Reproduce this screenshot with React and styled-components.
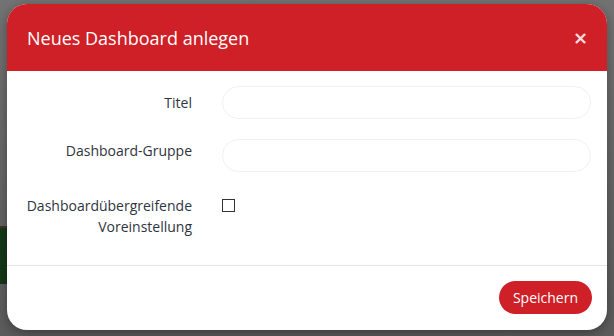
import styled, { createGlobalStyle } from "styled-components";

const Global = createGlobalStyle`
  html, body {
    margin: 0;
    padding: 0;
    width: 614px;
    height: 336px;
    overflow: hidden;
    font-family: "Open Sans", "Noto Sans", sans-serif;
  }
  * { box-sizing: border-box; }
`;

const Page = styled.div`
  position: relative;
  width: 614px;
  height: 336px;
  background: #777;
`;

const BackgroundStripe = styled.div`
  position: absolute;
  left: 0;
  top: 226px;
  width: 40px;
  height: 58px;
  background: #0b3d0f;
  border-top: 2px solid #4a3320;
`;

const Overlay = styled.div`
  position: absolute;
  inset: 0;
  background: linear-gradient(to bottom, rgba(90, 90, 90, 0.15), rgba(40, 40, 40, 0.35));
  display: flex;
  justify-content: center;
  padding-top: 4px;
`;

const Modal = styled.div`
  width: 600px;
  height: 326px;
  background: #fff;
  border-radius: 20px;
  overflow: hidden;
  box-shadow: 0 3px 12px rgba(0, 0, 0, 0.35);
  display: flex;
  flex-direction: column;
`;

const Header = styled.div`
  height: 67px;
  flex-shrink: 0;
  background: #cf1f27;
  display: flex;
  align-items: center;
  justify-content: space-between;
  padding: 0 19px 0 20px;
`;

const Title = styled.h4`
  margin: 0;
  font-size: 18px;
  font-weight: 400;
  color: #fff;
`;

const Close = styled.button`
  border: 0;
  background: none;
  padding: 0;
  color: #fff;
  opacity: 0.85;
  font-size: 18px;
  font-weight: 700;
  line-height: 1;
  font-family: "DejaVu Sans", sans-serif;
  cursor: pointer;
`;

const Body = styled.div`
  padding: 15px 16px 10px 16px;
  display: flex;
  flex-direction: column;
  gap: 20px;
  border-bottom: 1px solid #e5e5e5;
`;

const Row = styled.div`
  display: grid;
  grid-template-columns: 169px 1fr;
  column-gap: 30px;
  align-items: ${(p) => (p.$top ? "start" : "center")};
  margin-bottom: ${(p) => (p.$last ? "18px" : "0")};
`;

const Label = styled.label`
  text-align: right;
  font-size: 14px;
  line-height: 21px;
  color: #2f3540;
  margin-top: ${(p) => p.$shift || 0}px;
`;

const Input = styled.input`
  height: 33px;
  width: 369px;
  border: 1px solid #f0f0f0;
  border-radius: 17px;
  background: #fff;
  padding: 0 14px;
  font-family: inherit;
  font-size: 14px;
  outline: none;
`;

const Check = styled.span`
  display: block;
  width: 13px;
  height: 13px;
  border: 1.5px solid #333;
  margin-top: 7px;
`;

const Footer = styled.div`
  flex: 1;
  display: flex;
  justify-content: flex-end;
  align-items: flex-start;
  padding: 15px 15px 0 0;
`;

const Button = styled.button`
  height: 33px;
  padding: 0 14px;
  border: 0;
  border-radius: 17px;
  background: #cf1f27;
  color: #fff;
  font-family: inherit;
  font-size: 14px;
  cursor: pointer;
`;

export default function App() {
  return (
    <Page>
      <Global />
      <BackgroundStripe />
      <Overlay>
        <Modal>
          <Header>
            <Title>Neues Dashboard anlegen</Title>
            <Close aria-label="Schließen">×</Close>
          </Header>
          <Body>
            <Row>
              <Label>Titel</Label>
              <Input />
            </Row>
            <Row>
              <Label $shift={-10}>Dashboard-Gruppe</Label>
              <Input />
            </Row>
            <Row $top $last>
              <Label $shift={3}>
                Dashboardübergreifende
                <br />
                Voreinstellung
              </Label>
              <Check />
            </Row>
          </Body>
          <Footer>
            <Button>Speichern</Button>
          </Footer>
        </Modal>
      </Overlay>
    </Page>
  );
}
